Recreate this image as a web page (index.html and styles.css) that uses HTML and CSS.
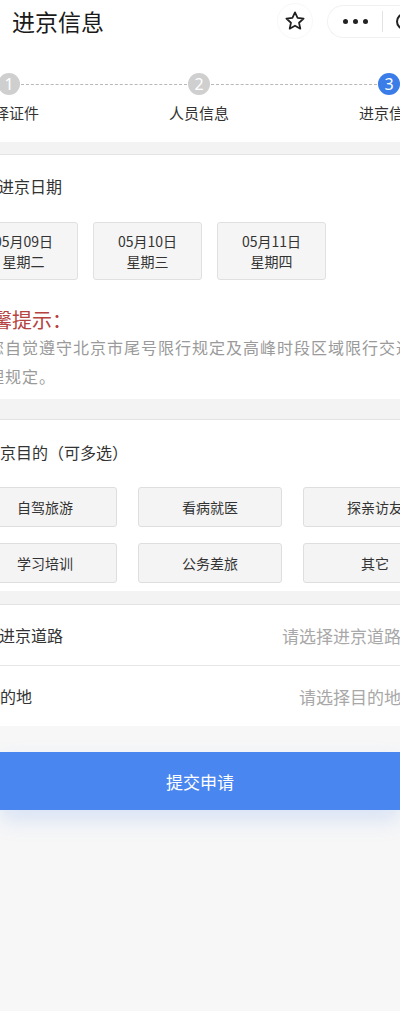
FILE: index.html
```html
<!DOCTYPE html>
<html lang="zh">
<head>
<meta charset="utf-8">
<title>进京信息</title>
<link rel="stylesheet" href="styles.css">
</head>
<body>
<div class="top">
  <header class="nav">
    <h1 class="nav-title">进京信息</h1>
    <span class="nav-star">
      <svg width="22" height="22" viewBox="0 0 24 24"><path d="M12 2.6l2.8 6.1 6.6.7-5 4.5 1.4 6.5L12 17.1l-5.8 3.3 1.4-6.5-5-4.5 6.6-.7z" fill="none" stroke="#1f1f1f" stroke-width="1.9" stroke-linejoin="round"/></svg>
    </span>
    <div class="capsule">
      <span class="dots"><i></i><i></i><i></i></span>
      <span class="cap-div"></span>
      <span class="cap-ring"></span>
    </div>
  </header>
  <div class="track">
    <span class="dot">1</span><span class="dash"></span><span class="dot">2</span><span class="dash"></span><span class="dot dot-active">3</span>
  </div>
  <div class="step-labels">
    <span>选择证件</span><span>人员信息</span><span>进京信息</span>
  </div>
</div>
<div class="band band-first"></div>
<section class="card card-date">
  <div class="label label-date">进京日期</div>
  <div class="date-grid">
    <div class="date-box"><span>05月09日</span><span>星期二</span></div>
    <div class="date-box"><span>05月10日</span><span>星期三</span></div>
    <div class="date-box"><span>05月11日</span><span>星期四</span></div>
  </div>
  <div class="tip-title">温馨提示：</div>
  <p class="tip-text">请您自觉遵守北京市尾号限行规定及高峰时段区域限行交通管理规定。</p>
</section>
<div class="band band-mid"></div>
<section class="card card-purpose">
  <div class="label label-purpose">进京目的（可多选）</div>
  <div class="purpose-grid">
    <div class="opt">自驾旅游</div>
    <div class="opt">看病就医</div>
    <div class="opt">探亲访友</div>
    <div class="opt">学习培训</div>
    <div class="opt">公务差旅</div>
    <div class="opt">其它</div>
  </div>
</section>
<div class="band band-small"></div>
<section class="card card-rows">
  <div class="row row-road"><span class="row-label">进京道路</span><span class="row-value">请选择进京道路</span></div>
  <div class="row row-dest"><span class="row-label">目的地</span><span class="row-value">请选择目的地</span></div>
</section>
<div class="submit-wrap">
  <button class="submit">提交申请</button>
</div>
</body>
</html>
```
FILE: styles.css
```css
html, body {
  margin: 0;
  padding: 0;
  overflow-x: hidden;
}
body {
  width: 400px;
  min-height: 1011px;
  background: #f7f7f7;
  font-family: "Noto Sans CJK SC", "Noto Sans", sans-serif;
  color: #333;
}
.top {
  background: #fff;
  height: 142px;
}
.nav {
  display: flex;
  align-items: center;
  height: 42px;
  padding-left: 12px;
  white-space: nowrap;
}
.nav-title {
  flex: 1;
  margin: 0;
  font-size: 23px;
  font-weight: 400;
  color: #1a1a1a;
  line-height: 30px;
}
.nav-star {
  display: flex;
  align-items: center;
  justify-content: center;
  width: 34px;
  height: 34px;
  border-radius: 50%;
  border: 1px solid #f7f7f7;
  margin-right: 14px;
  flex: none;
}
.capsule {
  display: flex;
  align-items: center;
  flex: none;
  width: 90px;
  margin-right: -17px;
  height: 33px;
  border: 1px solid #f1f1f1;
  border-right: none;
  border-radius: 17px 0 0 17px;
  padding-left: 15px;
  box-sizing: border-box;
}
.dots {
  display: flex;
  gap: 5px;
}
.dots i {
  width: 5px;
  height: 5px;
  border-radius: 50%;
  background: #222;
}
.cap-div {
  width: 1px;
  height: 21px;
  background: #e2e2e2;
  margin-left: 14px;
}
.cap-ring {
  width: 13px;
  height: 13px;
  border: 2.5px solid #222;
  border-radius: 50%;
  margin-left: 13px;
  flex: none;
}
.track {
  display: flex;
  align-items: center;
  width: 402px;
  margin-left: -2px;
  margin-top: 31px;
}
.dot {
  width: 22px;
  height: 22px;
  border-radius: 50%;
  background: #cfcfcf;
  color: #fff;
  font-family: "Noto Sans", sans-serif;
  font-size: 16px;
  line-height: 22px;
  text-align: center;
  flex: none;
}
.dot-active {
  background: #3a7de8;
}
.dash {
  flex: 1;
  border-top: 1px dashed #b8b8b8;
  margin: 0 1px;
}
.step-labels {
  display: grid;
  grid-template-columns: repeat(3, 190px);
  margin-left: -86px;
  margin-top: 8px;
  font-size: 15px;
  line-height: 20px;
  color: #333;
  text-align: center;
  white-space: nowrap;
}
.band {
  background: #f3f3f3;
  border-bottom: 1px solid #e3e3e3;
}
.band-first { height: 12px; }
.band-mid { height: 20px; }
.band-small { height: 13px; }
.card {
  background: #fff;
  white-space: nowrap;
}
.label {
  font-size: 16px;
  line-height: 22px;
  color: #333;
}
.card-date {
  padding: 20px 0 8px;
}
.label-date { margin-left: -2px; }
.date-grid {
  display: grid;
  grid-template-columns: repeat(3, 109px);
  gap: 15px;
  margin-left: -31px;
  margin-top: 25px;
}
.date-box {
  height: 58px;
  box-sizing: border-box;
  background: #f5f5f5;
  border: 1px solid #e0e0e0;
  border-radius: 3px;
  display: flex;
  flex-direction: column;
  align-items: center;
  justify-content: center;
  font-size: 14px;
  line-height: 20px;
  color: #333;
}
.tip-title {
  margin: 27px 0 0 -28px;
  font-size: 20px;
  line-height: 26px;
  color: #b5433f;
}
.tip-text {
  margin: 0 0 0 -29px;
  width: 445px;
  white-space: normal;
  font-size: 16px;
  letter-spacing: 1px;
  line-height: 29px;
  color: #9a9a9a;
}
.card-purpose {
  padding: 21px 0 8px;
}
.label-purpose { margin-left: -16px; }
.purpose-grid {
  display: grid;
  grid-template-columns: repeat(3, 144px);
  column-gap: 21px;
  row-gap: 16px;
  margin-left: -27px;
  margin-top: 24px;
}
.opt {
  height: 40px;
  box-sizing: border-box;
  background: #f4f4f4;
  border: 1px solid #dedede;
  border-radius: 3px;
  display: flex;
  align-items: center;
  justify-content: center;
  font-size: 14px;
  color: #333;
}
.row {
  display: flex;
  align-items: center;
  justify-content: space-between;
  height: 60px;
  margin-right: -1px;
}
.row-road {
  border-bottom: 1px solid #e6e6e6;
  margin-left: -1px;
}
.row-dest {
  margin-left: -16px;
}
.row-label {
  font-size: 16px;
  color: #333;
}
.row-value {
  font-size: 17px;
  color: #a8a8a8;
}
.submit-wrap {
  padding-top: 26px;
}
.submit {
  display: block;
  width: 100%;
  height: 58px;
  border: none;
  background: #4a86f0;
  color: #fff;
  font-family: "Noto Sans CJK SC", "Noto Sans", sans-serif;
  font-size: 17px;
  box-shadow: 0 10px 22px rgba(74, 134, 240, 0.18);
}
```
